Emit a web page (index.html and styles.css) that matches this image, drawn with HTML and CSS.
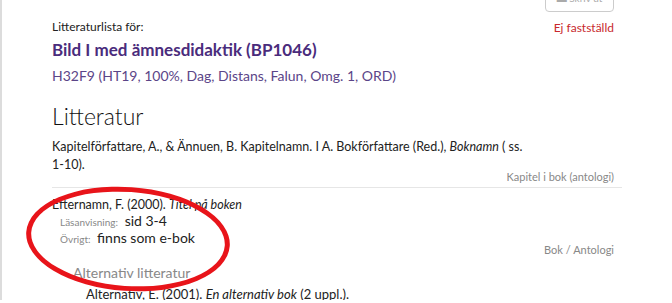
FILE: index.html
```html
<!DOCTYPE html>
<html>
<head>
<meta charset="utf-8"/>
<link rel="stylesheet" href="styles.css">
<title>Litteraturlista</title>
</head>
<body>
<div class="page">
  <div class="head">
    <div class="course">
      <div class="label">Litteraturlista för:</div>
      <h1 class="title">Bild I med ämnesdidaktik (BP1046)</h1>
      <div class="occasion">H32F9 (HT19, 100%, Dag, Distans, Falun, Omg. 1, ORD)</div>
    </div>
    <div class="side">
      <div class="btn">&#9644; Skriv ut</div>
      <div class="status">Ej fastställd</div>
    </div>
  </div>

  <h2 class="section">Litteratur</h2>

  <div class="item">
    <div class="ref">Kapitelförfattare, A., &amp; Ännuen, B. Kapitelnamn. I A. Bokförfattare (Red.), <i>Boknamn</i> ( ss. 1-10).</div>
    <div class="type">Kapitel i bok (antologi)</div>
  </div>

  <div class="item last">
    <div class="ref">Efternamn, F. (2000). <i>Titel på boken</i></div>
    <div class="meta"><span class="key">Läsanvisning:</span> sid 3-4</div>
    <div class="meta"><span class="key">Övrigt:</span> finns som e-bok</div>
    <div class="type">Bok / Antologi</div>
    <div class="alt">
      <div class="alt-head">Alternativ litteratur</div>
      <div class="alt-ref">Alternativ, E. (2001). <i>En alternativ bok</i> (2 uppl.).</div>
    </div>
  </div>

  <div class="circle"></div>
</div>
</body>
</html>
```

FILE: styles.css
```css
body {
  margin: 0;
  font-family: Lato, "Open Sans", sans-serif;
  color: #222;
  background: #fff;
  overflow: hidden;
}

.page {
  position: relative;
  border-left: 2px solid #dcdcdc;
  height: 300px;
  overflow: hidden;
  padding: 0 58px 0 50px;
}

.head {
  display: flex;
  justify-content: space-between;
}

.course { padding-top: 20px; }

.label { font-size: 12px; line-height: 14px; }

.title {
  margin: 4px 0 0;
  font-size: 17px;
  line-height: 24px;
  font-weight: 700;
  color: #4a2c7c;
}

.occasion {
  margin-top: 5px;
  font-size: 14px;
  line-height: 18px;
  color: #5b4588;
}

.side {
  display: flex;
  flex-direction: column;
  align-items: flex-end;
}

.btn {
  box-sizing: border-box;
  margin-top: -14px;
  width: 69px;
  height: 26px;
  padding-top: 4px;
  border: 1px solid #ccc;
  border-radius: 4px;
  color: #aaa;
  font-size: 10px;
  line-height: 14px;
  text-align: center;
}

.status {
  margin-top: 8px;
  font-size: 12px;
  color: #c8282d;
}

.section {
  margin: 16px 0 7px;
  font-size: 23px;
  line-height: 30px;
  font-weight: 300;
  color: #111;
}

.item {
  border-bottom: 1px solid #e6e6e6;
  padding-bottom: 3px;
  margin-right: -8px;
  padding-right: 8px;
  margin-bottom: 8px;
}

.item.last { border-bottom: none; }

.ref { font-size: 12.5px; line-height: 18px; max-width: 480px; }

.type {
  text-align: right;
  font-size: 11px;
  line-height: 14px;
  color: #888;
}

.ref + .type { margin-top: -4px; }

.meta {
  padding-left: 8px;
  font-size: 14px;
  line-height: 17px;
}

.ref + .meta { margin-top: -2px; }

.key { font-size: 10px; line-height: 1; color: #888; margin-right: 3px; }

.meta + .type { margin-top: -3px; }

.alt { padding-left: 21px; margin-top: 7px; }

.alt-head { font-size: 14px; color: #888; line-height: 18px; }

.alt-ref { padding-left: 13px; font-size: 13px; line-height: 22px; margin-top: 1px; }

.circle {
  position: absolute;
  left: 24px;
  top: 187px;
  width: 194px;
  height: 94px;
  border: 5px solid #e8141a;
  border-radius: 50%;
  transform: rotate(4deg);
}
```
